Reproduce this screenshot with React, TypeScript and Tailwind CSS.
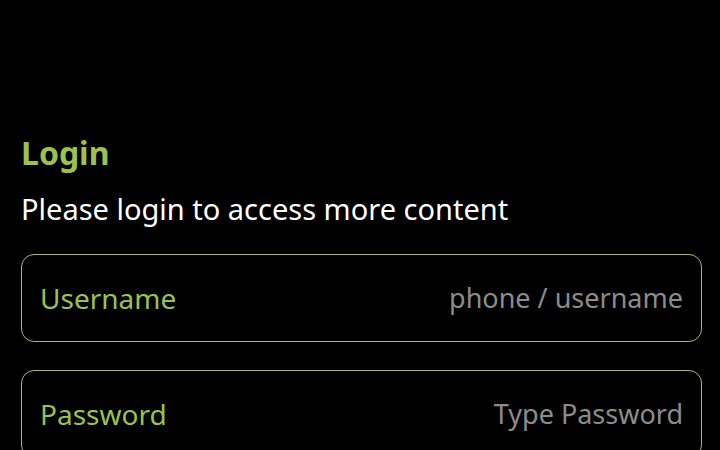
export default function App() {
  return (
    <div
      className="h-[450px] w-[720px] overflow-hidden bg-black"
      style={{ fontFamily: '"Noto Sans", "Open Sans", sans-serif' }}
    >
      <div className="pl-[21px] pr-[18px] pt-[130px]">
        <h1 className="text-[32px] font-bold leading-[46px] text-[#9cc24c]">Login</h1>
        <p className="mt-[13px] text-[29px] leading-[40px] text-white">Please login to access more content</p>
        <div className="mt-[25px] flex flex-col gap-[28px]">
          <Field label="Username" placeholder="phone / username" />
          <Field label="Password" placeholder="Type Password" type="password" />
        </div>
      </div>
    </div>
  );
}

function Field({ label, placeholder, type = "text" }: { label: string; placeholder: string; type?: string }) {
  return (
    <label className="flex h-[88px] items-center justify-between rounded-[13px] border-[1.5px] border-[#b0b276] px-[18px]">
      <span className="text-[28px] text-[#9cc24c]">{label}</span>
      <input
        type={type}
        placeholder={placeholder}
        className="w-[320px] bg-transparent text-right text-[27px] text-white outline-none placeholder:text-[#8c8c8c]"
      />
    </label>
  );
}
